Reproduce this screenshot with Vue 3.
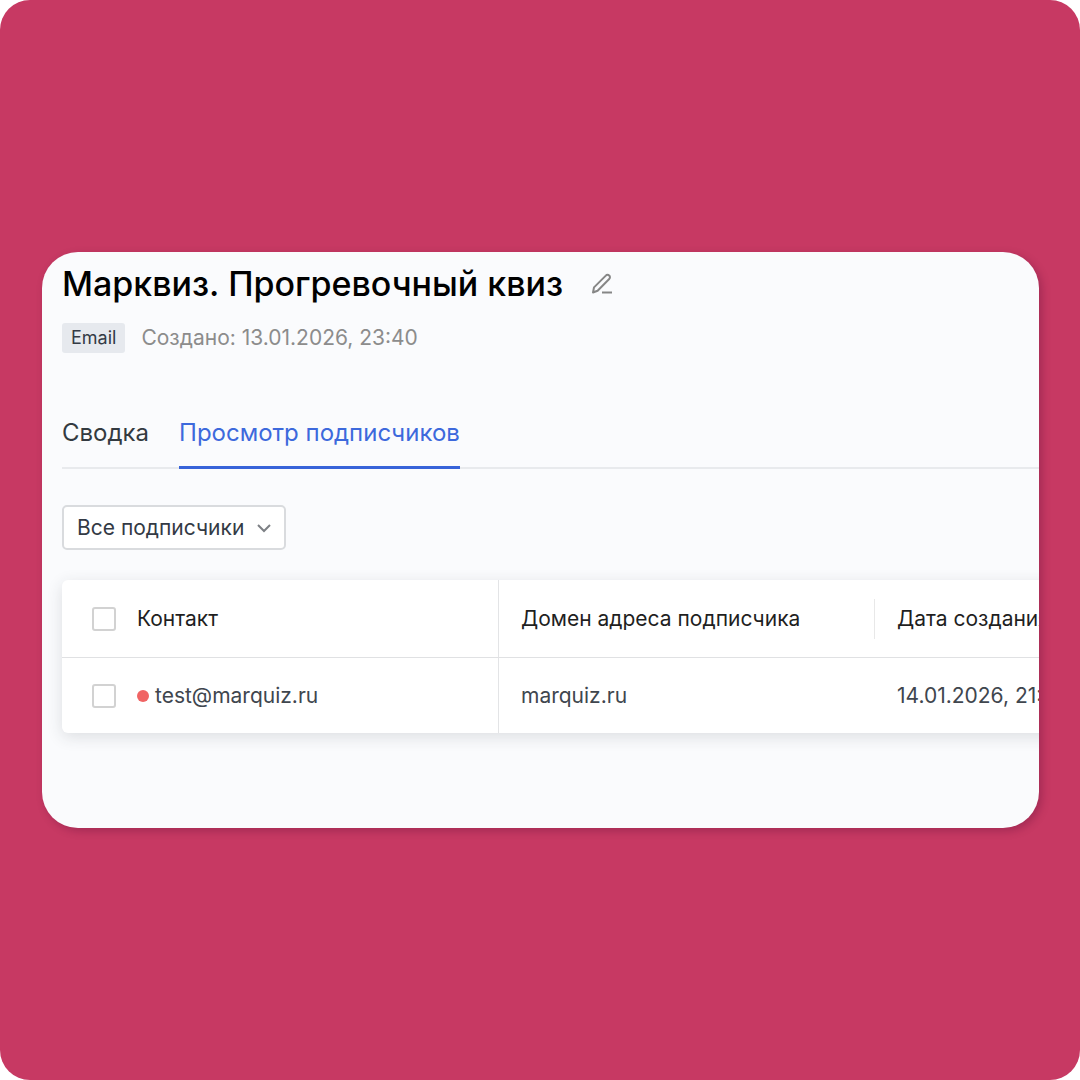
<template>
    <div class="page">
        <main class="panel">
            <header class="list-header">
                <div class="title-row">
                    <h1 class="title">{{ list.name }}</h1>
                    <button class="edit-button" type="button" aria-label="Изменить название">
                        <svg class="edit-icon" viewBox="0 0 22 22" fill="none" stroke="currentColor" stroke-width="2" stroke-linejoin="round">
                            <path d="M2 19.5 3 14.4 14.8 2.6a2.3 2.3 0 0 1 3.4 0 2.3 2.3 0 0 1 0 3.4L6.6 17.8Z" />
                            <path d="M11 19.5H21" />
                        </svg>
                    </button>
                </div>
                <div class="meta">
                    <span class="badge">{{ list.channel }}</span>
                    <span class="created">Создано: {{ list.created }}</span>
                </div>
            </header>

            <nav class="tabs" role="tablist">
                <button
                    v-for="tab in tabs"
                    :key="tab.id"
                    class="tab"
                    :class="{ active: tab.id === activeTab }"
                    type="button"
                    role="tab"
                    :aria-selected="tab.id === activeTab"
                    @click="activeTab = tab.id"
                >
                    {{ tab.label }}
                </button>
            </nav>

            <div class="filter">
                <select v-model="filter" class="filter-select" aria-label="Фильтр подписчиков">
                    <option value="all">Все подписчики</option>
                </select>
                <svg class="filter-arrow" viewBox="0 0 14 14" fill="none" stroke="currentColor" stroke-width="2">
                    <path d="M1 4l6 6 6-6" />
                </svg>
            </div>

            <table class="subscribers">
                <thead>
                    <tr>
                        <th class="contact-col">
                            <div class="contact">
                                <input v-model="allChecked" class="checkbox" type="checkbox" aria-label="Выбрать все" />
                                <span>Контакт</span>
                            </div>
                        </th>
                        <th class="domain-col"><div class="split">Домен адреса подписчика</div></th>
                        <th>Дата создания</th>
                    </tr>
                </thead>
                <tbody>
                    <tr v-for="row in subscribers" :key="row.email">
                        <td>
                            <div class="contact">
                                <input v-model="row.checked" class="checkbox" type="checkbox" :aria-label="row.email" />
                                <span class="email"><i class="status-dot"></i>{{ row.email }}</span>
                            </div>
                        </td>
                        <td>{{ row.domain }}</td>
                        <td>{{ row.created }}</td>
                    </tr>
                </tbody>
            </table>
        </main>
    </div>
</template>

<script setup>
import { computed, reactive, ref } from 'vue';

const list = {
    name: 'Марквиз. Прогревочный квиз',
    channel: 'Email',
    created: '13.01.2026, 23:40',
};

const tabs = [
    { id: 'summary', label: 'Сводка' },
    { id: 'subscribers', label: 'Просмотр подписчиков' },
];

const activeTab = ref('subscribers');
const filter = ref('all');

const subscribers = reactive([
    { email: 'test@marquiz.ru', domain: 'marquiz.ru', created: '14.01.2026, 21:30', checked: false },
]);

const allChecked = computed({
    get: () => subscribers.every((row) => row.checked),
    set: (value) => subscribers.forEach((row) => { row.checked = value; }),
});
</script>

<style>
body {
    background: #fff;
}
</style>

<style scoped>
.page {
    box-sizing: border-box;
    min-height: 100vh;
    padding: 42px 41px 42px 42px;
    display: flex;
    align-items: center;
    background: #c73963;
    border-radius: 30px;
    font-family: Inter, "Noto Sans", sans-serif;
    color: #333a45;
}
.panel {
    flex: 1;
    min-width: 0;
    box-sizing: border-box;
    padding: 7px 0 95px 20px;
    overflow: hidden;
    background: #fafbfd;
    border-radius: 36px;
    box-shadow: 3px 3px 8px rgba(80, 10, 50, 0.3);
}
button,
select {
    font-family: inherit;
    cursor: pointer;
}
.title-row {
    display: flex;
    align-items: center;
    gap: 28px;
}
.title {
    margin: 0;
    font-size: 34px;
    line-height: 50px;
    font-weight: 500;
    color: #000;
}
.edit-button {
    display: flex;
    padding: 0;
    border: 0;
    background: none;
    color: #868686;
}
.edit-icon {
    width: 22px;
    height: 22px;
}
.meta {
    display: flex;
    align-items: center;
    gap: 16px;
    margin-top: 14px;
}
.badge {
    padding: 0 9px;
    font-size: 18px;
    line-height: 30px;
    background: #e6e9ee;
    border-radius: 3px;
}
.created {
    font-size: 21px;
    line-height: 30px;
    color: #8c8c8c;
}
.tabs {
    display: flex;
    gap: 30px;
    margin-top: 48px;
    box-shadow: inset 0 -2px #e8eaed;
}
.tab {
    padding: 16px 0 17px;
    border: 0;
    border-bottom: 3px solid transparent;
    background: none;
    font-size: 24px;
    line-height: 32px;
    color: #333a40;
}
.tab.active {
    border-bottom-color: #3763d9;
    color: #3d69dc;
}
.filter {
    display: inline-grid;
    align-items: center;
    margin-top: 36px;
}
.filter-select {
    grid-area: 1 / 1;
    appearance: none;
    height: 45px;
    padding: 0 39px 0 13px;
    border: 2px solid #d9dbde;
    border-radius: 5px;
    background: #fff;
    font-size: 21px;
    color: #333a45;
}
.filter-arrow {
    grid-area: 1 / 1;
    justify-self: end;
    width: 14px;
    height: 14px;
    margin-right: 15px;
    color: #7d8085;
    pointer-events: none;
}
/* wider than the panel, the last column runs past its edge */
.subscribers {
    width: 120%;
    margin-top: 30px;
    table-layout: fixed;
    border-collapse: separate;
    border-spacing: 0;
    background: #fff;
    border-radius: 6px;
    box-shadow: 0 4px 16px rgba(40, 50, 60, 0.14);
    font-size: 21px;
    line-height: 40px;
    white-space: nowrap;
}
th,
td {
    padding: 18px 22px 17px;
    text-align: left;
    font-weight: 400;
}
th {
    padding-top: 19px;
    padding-bottom: 18px;
    border-bottom: 1px solid #e0e1e3;
    color: #1f1f1f;
}
td {
    color: #40464e;
}
th:first-child,
td:first-child {
    padding-left: 30px;
    border-right: 1px solid #e3e4e6;
}
.contact-col {
    width: 384px;
}
.domain-col {
    width: 354px;
    padding-right: 0;
}
.split {
    border-right: 1px solid #e8e8e8;
}
.contact {
    display: flex;
    align-items: center;
    gap: 21px;
}
.checkbox {
    appearance: none;
    box-sizing: border-box;
    width: 24px;
    height: 24px;
    margin: 0;
    border: 2px solid #d2d2d2;
    border-radius: 3px;
    background: #fff;
}
.checkbox:checked {
    background: #3763d9;
    border-color: #3763d9;
}
.email {
    display: flex;
    align-items: center;
    gap: 6px;
}
.status-dot {
    width: 12px;
    height: 12px;
    border-radius: 50%;
    background: #f06464;
}
</style>
